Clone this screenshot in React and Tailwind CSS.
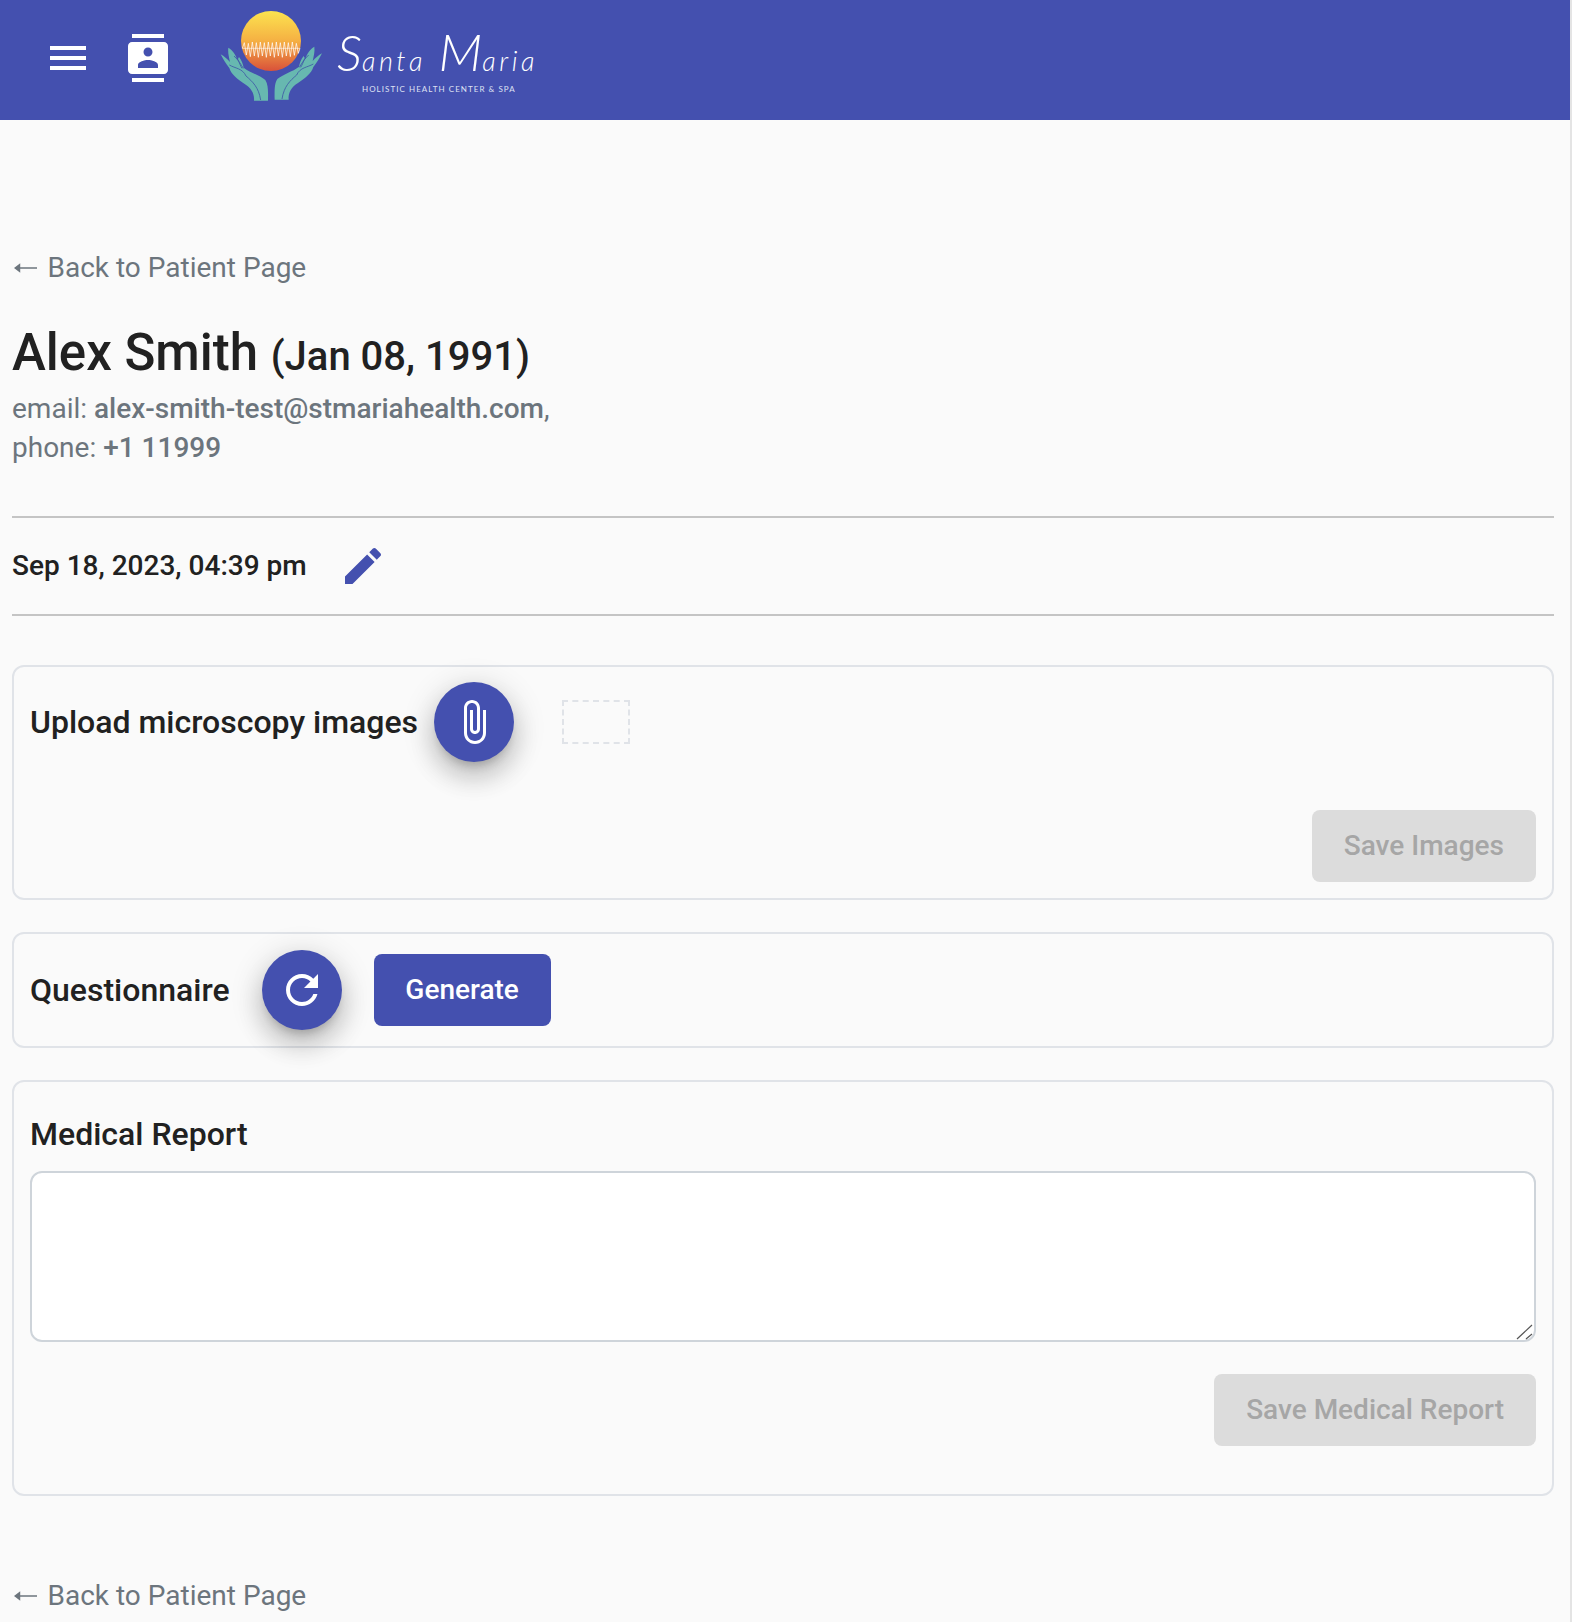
const Icon = ({ d, className = "" }) => (
  <svg viewBox="0 0 24 24" className={`w-12 h-12 shrink-0 fill-current ${className}`}>
    <path d={d} />
  </svg>
);

const MENU = "M3 18h18v-2H3v2zm0-5h18v-2H3v2zm0-7v2h18V6H3z";
const CONTACTS = "M20 0H4v2h16V0zM4 24h16v-2H4v2zM20 4H4c-1.1 0-2 .9-2 2v12c0 1.1.9 2 2 2h16c1.1 0 2-.9 2-2V6c0-1.1-.9-2-2-2zm-8 2.75c1.24 0 2.25 1.01 2.25 2.25s-1.01 2.25-2.25 2.25S9.75 10.24 9.75 9 10.76 6.75 12 6.75zM17 17H7v-1.5c0-1.67 3.33-2.5 5-2.5s5 .83 5 2.5V17z";
const EDIT = "M3 17.25V21h3.75L17.81 9.94l-3.75-3.75L3 17.25zM20.71 7.04c.39-.39.39-1.02 0-1.41l-2.34-2.34c-.39-.39-1.02-.39-1.41 0l-1.83 1.83 3.75 3.75 1.83-1.83z";
const ATTACH = "M16.5 6v11.5c0 2.21-1.79 4-4 4s-4-1.79-4-4V5c0-1.38 1.12-2.5 2.5-2.5s2.5 1.12 2.5 2.5v10.5c0 .55-.45 1-1 1s-1-.45-1-1V6H10v9.5c0 1.38 1.12 2.5 2.5 2.5s2.5-1.12 2.5-2.5V5c0-2.21-1.79-4-4-4S7 2.79 7 5v12.5c0 3.04 2.46 5.5 5.5 5.5s5.5-2.46 5.5-5.5V6h-1.5z";
const REFRESH = "M17.65 6.35C16.2 4.9 14.21 4 12 4c-4.42 0-7.99 3.58-7.99 8s3.57 8 7.99 8c3.73 0 6.84-2.55 7.73-6h-2.08c-.82 2.33-3.04 4-5.65 4-3.31 0-6-2.69-6-6s2.69-6 6-6c1.66 0 3.14.69 4.22 1.78L13 11h7V4l-2.35 2.35z";

const HAND = "M32 163 C42 168 52 178 60 186 C57 172 53 158 55 143 C68 150 78 165 82 181 L87 171 C95 181 99 193 101 203 C120 218 150 226 166 240 C176 255 174 280 174 302 L132 302 C134 282 124 264 104 252 C84 238 64 224 58 204 C48 192 40 178 32 163 Z";
const HAND_LINES = "M58 195 C75 205 98 205 108 228 C128 245 146 262 152 300 M100 205 C92 192 85 180 72 168 M84 178 C88 190 92 198 96 205";

function Logo() {
  return (
    <div className="flex items-start ml-[38px]">
      <svg viewBox="0 0 360 330" className="w-[120px] h-[110px] shrink-0">
        <defs>
          <linearGradient id="sun" x1="0" y1="0" x2="0" y2="1">
            <stop offset="0" stopColor="#fce34f" />
            <stop offset="0.5" stopColor="#f5b043" />
            <stop offset="1" stopColor="#d9513a" />
          </linearGradient>
        </defs>
        <circle cx="183" cy="123" r="90" fill="url(#sun)" />
        <path
          d="M97 145 L103 128 L109 165 L115 130 L121 170 L127 126 L133 168 L139 128 L145 172 L151 126 L157 168 L163 128 L169 172 L175 126 L181 168 L187 128 L193 172 L199 126 L205 168 L211 128 L217 172 L223 126 L229 168 L235 128 L241 170 L247 126 L253 166 L259 130 L265 160 L270 145"
          fill="none"
          stroke="#fff"
          strokeOpacity="0.85"
          strokeWidth="2.5"
        />
        <path d="M97 145 H270" stroke="#fff" strokeOpacity="0.85" strokeWidth="2" />
        <g>
          <path d={HAND} fill="#67b8b0" />
          <path d={HAND_LINES} fill="none" stroke="#3f58a6" strokeWidth="2.5" />
        </g>
        <g transform="translate(368 -3) scale(-1 1)">
          <path d={HAND} fill="#67b8b0" />
          <path d={HAND_LINES} fill="none" stroke="#3f58a6" strokeWidth="2.5" />
        </g>
      </svg>
      <div className="ml-[7px] mt-[26px] flex flex-col items-start text-white">
        <div className="font-['Lato',sans-serif] italic font-light text-[27px] leading-[50px] tracking-[3.6px] whitespace-nowrap">
          <span className="text-[50px] leading-[50px] tracking-[0px]">S</span>anta <span className="ml-[2px] text-[52px] leading-[50px] tracking-[0px]">M</span>aria
        </div>
        <div className="ml-[25px] mt-[-2px] text-[8px] leading-[10px] tracking-[1.05px] text-[#dfe1f3] whitespace-nowrap font-['Lato',sans-serif]">
          HOLISTIC HEALTH CENTER &amp; SPA
        </div>
      </div>
    </div>
  );
}

function BackLink({ className = "" }) {
  return (
    <a href="#" className={`flex items-center text-[28px] leading-10 text-[#6c757d] ${className}`}>
      <span className="w-[33.5px] ml-[2px] flex items-center">
        <svg viewBox="0 0 24 12" className="w-[23px] h-[12px] fill-current">
          <path d="M0 6 L6.5 1 V5.1 H24 V6.9 H6.5 V11 Z" />
        </svg>
      </span>
      Back to Patient Page
    </a>
  );
}

function Fab({ d, className = "" }) {
  return (
    <button className={`w-20 h-20 rounded-full bg-[#4450af] text-white flex items-center justify-center shrink-0 shadow-[0_8px_10px_-5px_rgba(0,0,0,0.2),0_16px_24px_2px_rgba(0,0,0,0.14),0_6px_30px_5px_rgba(0,0,0,0.12)] ${className}`}>
      <Icon d={d} />
    </button>
  );
}

function SaveButton({ children }) {
  return (
    <button disabled className="h-[72px] px-8 rounded-lg bg-[#dcdcdc] text-[#a6a6a6] text-[28px] font-medium">
      {children}
    </button>
  );
}

export default function App() {
  return (
    <div className="min-h-screen bg-[#fafafa] border-r-2 border-[#e4e4e4] font-['Roboto',sans-serif] text-[#212121] overflow-hidden">
      {/* HEADER */}
      <header className="h-[120px] bg-[#4450af] text-white flex items-start pl-11">
        <Icon d={MENU} className="mt-[34px]" />
        <Icon d={CONTACTS} className="mt-[34px] ml-8" />
        <Logo />
      </header>

      <main className="pl-3 pr-4 pt-[128px]">
        <BackLink />

        {/* PATIENT INFO */}
        <h1 className="mt-[32px] h-[69px] text-[51px] leading-[66px] font-medium whitespace-nowrap">
          Alex Smith <small className="text-[40px] font-medium">(Jan 08, 1991)</small>
        </h1>
        <div className="text-[28px] leading-[39.2px] text-[#6c757d]">
          <div>email: <span className="font-medium">alex-smith-test@stmariahealth.com</span>,</div>
          <div>phone: <span className="font-medium">+1 11999</span></div>
        </div>

        {/* DATE */}
        <div className="mt-[49px] h-[100px] border-y-2 border-[#c4c4c4] flex items-center">
          <span className="text-[28px] font-medium">Sep 18, 2023, 04:39 pm</span>
          <Icon d={EDIT} className="ml-8 text-[#4450af]" />
        </div>

        {/* UPLOAD */}
        <section className="mt-[49px] h-[235px] border-2 border-[#e0e3e8] rounded-xl px-4 pt-[15px] flex flex-col">
          <div className="flex items-center">
            <h2 className="text-[32px] font-medium whitespace-nowrap">Upload microscopy images</h2>
            <Fab d={ATTACH} className="ml-4" />
            <div className="ml-12 w-[68px] h-[44px] border-2 border-dashed border-[#e0e3e8]" />
          </div>
          <div className="flex justify-end mt-[48px]">
            <SaveButton>Save Images</SaveButton>
          </div>
        </section>

        {/* QUESTIONNAIRE */}
        <section className="mt-[32px] h-[116px] border-2 border-[#e0e3e8] rounded-xl px-4 flex items-center">
          <h2 className="text-[32px] font-medium">Questionnaire</h2>
          <Fab d={REFRESH} className="ml-8" />
          <button className="ml-8 h-[72px] w-[177px] rounded-lg bg-[#4450af] text-white text-[28px] font-medium">
            Generate
          </button>
        </section>

        {/* MEDICAL REPORT */}
        <section className="mt-[32px] h-[416px] border-2 border-[#e0e3e8] rounded-xl px-4 pt-[32px]">
          <h2 className="text-[32px] leading-10 font-medium">Medical Report</h2>
          <div className="relative mt-[17px]">
            <textarea className="block w-full h-[171px] bg-white border-2 border-[#ced4da] rounded-xl outline-none resize-none" />
            <svg viewBox="0 0 20 20" className="absolute right-[2px] bottom-[2px] w-5 h-5 stroke-[#555]" strokeWidth="1.2">
              <path d="M3 19 L18 5 M12 19 L18 14" />
            </svg>
          </div>
          <div className="flex justify-end mt-8">
            <SaveButton>Save Medical Report</SaveButton>
          </div>
        </section>

        <BackLink className="mt-[80px]" />
      </main>
    </div>
  );
}
